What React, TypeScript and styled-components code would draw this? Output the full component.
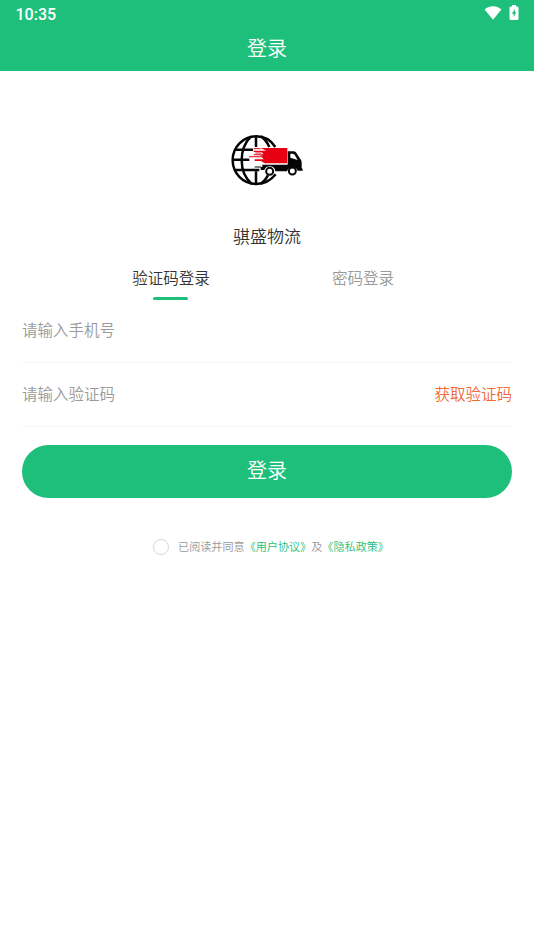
import React, { useState } from "react";
import styled, { createGlobalStyle } from "styled-components";

const GREEN = "#1dbf7b";

const GlobalStyle = createGlobalStyle`
  * { box-sizing: border-box; }
  body {
    margin: 0;
    background: #fff;
    font-family: "Noto Sans CJK SC", sans-serif;
    font-weight: 350;
    color: #333;
  }
  button, input { font: inherit; border: 0; padding: 0; background: none; }
`;

const Page = styled.div`
  display: flex;
  flex-direction: column;
  min-height: 950px;
  background: #fff;
`;

const Header = styled.header`
  height: 71px;
  background: ${GREEN};
  color: #fff;
`;

const StatusBar = styled.div`
  display: flex;
  justify-content: space-between;
  height: 28px;
  padding: 4px 15px 0 15.500px;
`;

const Clock = styled.span`
  font: 500 16px/21px Roboto, sans-serif;
`;

const StatusIcons = styled.div`
  display: flex;
  align-items: flex-start;
  gap: 7px;
  padding-top: 1px;
`;

const Title = styled.h1`
  margin: 0;
  font-size: 20px;
  font-weight: 350;
  line-height: 40px;
  text-align: center;
`;

const Brand = styled.section`
  display: flex;
  flex-direction: column;
  align-items: center;
  padding-top: 54px;
`;

const BrandName = styled.div`
  margin-top: 29px;
  font-size: 17px;
  line-height: 24px;
`;

const Tabs = styled.nav`
  display: flex;
  margin: 17px 75px 0;
`;

const Tab = styled.button<{ $active: boolean }>`
  flex: 1;
  display: flex;
  flex-direction: column;
  align-items: center;
  gap: 8px;
  font-size: 15.5px;
  line-height: 24px;
  color: ${(p) => (p.$active ? "#333" : "#999")};

  &::after {
    content: "";
    width: 35px;
    height: 3px;
    margin-right: 1px;
    border-radius: 2px;
    background: ${(p) => (p.$active ? GREEN : "transparent")};
  }
`;

const Form = styled.form`
  display: flex;
  flex-direction: column;
  padding: 0 22px;
`;

const Field = styled.div`
  display: flex;
  align-items: center;
  height: 64px;
  padding-bottom: 4px;
  margin-top: -1px;
  border-bottom: 1px solid #f5f5f5;

  & + & { margin-top: 0; }
`;

const Input = styled.input`
  flex: 1;
  min-width: 0;
  height: 30px;
  font-size: 15.5px;
  outline: none;
  &::placeholder { color: #999; opacity: 1; }
`;

const CodeButton = styled.button`
  font-size: 15.5px;
  line-height: 24px;
  color: #f06a35;
`;

const Submit = styled.button`
  height: 53px;
  margin-top: 18px;
  padding-bottom: 5px;
  border-radius: 27px;
  background: ${GREEN};
  color: #fff;
  font-size: 20px;
`;

const Terms = styled.div`
  display: flex;
  justify-content: center;
  align-items: center;
  height: 20px;
  margin-top: 38px;
  padding-left: 8px;
  gap: 9px;
  font-size: 11.1px;
  line-height: 20px;
  color: #999;
`;

const Radio = styled.button<{ $checked: boolean }>`
  width: 16px;
  height: 16px;
  border-radius: 50%;
  margin-top: 1px;
  && { border: 1px solid #d8d8d8; }
  background: ${(p) => (p.$checked ? GREEN : "#fff")};
`;

const TermsLink = styled.span`
  color: ${GREEN};
`;

function WifiIcon() {
  return (
    <svg width="18" height="15" viewBox="0 0 18 15">
      <path d="M.6 4.400C5.400.1 12.600.1 17.400 4.400L9 14.700Z" fill="#fff" />
    </svg>
  );
}

function BatteryIcon() {
  return (
    <svg width="10" height="15" viewBox="0 0 10 15">
      <path d="M3 0h4v1.500h1.200q1.300 0 1.300 1.300v10.900q0 1.300-1.300 1.300H1.800q-1.300 0-1.300-1.300V2.800q0-1.300 1.300-1.300H3Z" fill="#fff" />
      <path d="M5.800 3.800 2.900 8.700h1.700v3.500l2.700-5H5.800Z" fill={GREEN} />
    </svg>
  );
}

function Logo() {
  return (
    <svg width="94" height="70" viewBox="0 0 282 210">
      <g fill="none" stroke="#050505" strokeWidth="7.500">
        <path d="M166 66Q145 34 109 34A71 71 0 0 0 38 106A71 71 0 0 0 109 177Q144 177 167 148" />
        <path d="M108 33V66M108 139V178M93 34C70 57 65 82 65 106s5 49 30 71M123 34C135 44 143 54 148 66M122 177C133 168 140 160 144 151" />
        <path d="M46 74H99M38 104H88M45 135H118" />
      </g>
      <path d="M202 69H122L139 77H101V81H124L131 88H101V91H119L130 94H87V97H125L131 103H104V108H123L134 115H201Z" fill="#e60012" />
      <path d="M101 71H122M106 84H124" stroke="#e60012" strokeWidth="3" />
      <path d="M127 119H203V79H222Q228 80 231 87L243 105Q245 108 245 114V129L248 133V137H233A17 17 0 0 0 201 139H166A17 17 0 0 0 133 135H122V126H127Z" fill="#050505" />
      <path d="M211 86H219Q224 87 226 93L233 105L211 98Z" fill="#fff" />
      <g fill="#fff" stroke="#050505" strokeWidth="6">
        <circle cx="149" cy="139" r="10.500" />
        <circle cx="217" cy="138" r="10.500" />
      </g>
      <path d="M104 126H123" stroke="#050505" strokeWidth="3" />
    </svg>
  );
}

export default function App() {
  const [tab, setTab] = useState(0);
  const [agreed, setAgreed] = useState(false);
  return (
    <>
      <GlobalStyle />
      <Page>
        <Header>
          <StatusBar>
            <Clock>10:35</Clock>
            <StatusIcons>
              <WifiIcon />
              <BatteryIcon />
            </StatusIcons>
          </StatusBar>
          <Title>登录</Title>
        </Header>
        <Brand>
          <Logo />
          <BrandName>骐盛物流</BrandName>
        </Brand>
        <Tabs>
          {["验证码登录", "密码登录"].map((label, i) => (
            <Tab key={label} $active={tab === i} onClick={() => setTab(i)}>
              {label}
            </Tab>
          ))}
        </Tabs>
        <Form onSubmit={(e) => e.preventDefault()}>
          <Field>
            <Input placeholder="请输入手机号" />
          </Field>
          <Field>
            <Input placeholder="请输入验证码" />
            <CodeButton type="button">获取验证码</CodeButton>
          </Field>
          <Submit>登录</Submit>
        </Form>
        <Terms>
          <Radio $checked={agreed} onClick={() => setAgreed(!agreed)} aria-label="同意" />
          <span>
            已阅读并同意<TermsLink>《用户协议》</TermsLink>及<TermsLink>《隐私政策》</TermsLink>
          </span>
        </Terms>
      </Page>
    </>
  );
}
